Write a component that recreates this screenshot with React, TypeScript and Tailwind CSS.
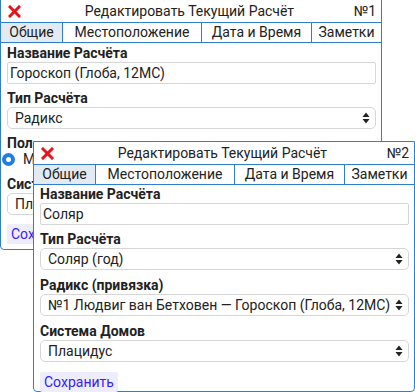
import React from "react";

const font = { fontFamily: "Roboto, 'Noto Sans', sans-serif" };

function CloseIcon() {
  return (
    <svg width="13" height="13" viewBox="0 0 13 13" className="block">
      <path d="M2 2 L11 11 M11 2 L2 11" stroke="#e8141c" strokeWidth="3" strokeLinecap="square" />
    </svg>
  );
}

function Arrows() {
  return (
    <svg width="8" height="12" viewBox="0 0 8 12" className="block">
      <path d="M4 0.5 L7.5 5 L0.5 5 Z" fill="#222" />
      <path d="M4 11.5 L7.5 7 L0.5 7 Z" fill="#222" />
    </svg>
  );
}

function Label({ children }: { children: React.ReactNode }) {
  return <div className="h-[17px] leading-[17px] text-[14px] font-bold text-[#222]">{children}</div>;
}

function TextBox({ value }: { value: string }) {
  return (
    <div className="h-[22px] border border-[#d6d6d6] rounded-[2px] px-[2px] leading-[20px] text-[14px] text-[#222] whitespace-nowrap overflow-hidden">
      {value}
    </div>
  );
}

function SelectBox({ value }: { value: string }) {
  return (
    <div className="h-[22px] border border-[#d6d6d6] rounded-[5px] pl-[7px] pr-[5px] flex items-center justify-between text-[14px] text-[#222] whitespace-nowrap overflow-hidden">
      <span>{value}</span>
      <Arrows />
    </div>
  );
}

function TitleBar({ num }: { num: string }) {
  return (
    <div className="h-[22px] flex items-center pl-[7px] pr-[5px] text-[14px] text-[#222]">
      <CloseIcon />
      <div className="flex-1 text-center pl-[4px]">Редактировать Текущий Расчёт</div>
      <div>{num}</div>
    </div>
  );
}

function Tabs() {
  const tabs = [
    { name: "Общие", w: "w-[61px]", active: true },
    { name: "Местоположение", w: "w-[139px]", active: false },
    { name: "Дата и Время", w: "w-[110px]", active: false },
    { name: "Заметки", w: "flex-1", active: false },
  ];
  return (
    <div className="h-[21px] flex border-t border-b border-[#2f7fd0] text-[14px] text-[#222]">
      {tabs.map((t, i) => (
        <div
          key={t.name}
          className={
            t.w +
            " h-full leading-[19px] text-center " +
            (i > 0 ? "border-l border-[#2f7fd0] " : "") +
            (t.active ? "bg-[#e3eaf1]" : "")
          }
        >
          {t.name}
        </div>
      ))}
    </div>
  );
}

function SaveButton() {
  return (
    <div className="inline-block h-[20px] px-[4px] leading-[20px] rounded-[2px] bg-[#ededfc] text-[14px] text-[#3a1cf5]">
      Сохранить
    </div>
  );
}

function WindowOne() {
  return (
    <div className="absolute left-0 top-[-1px] w-[382px] h-[251px] bg-white border border-[#2f7fd0] rounded-b-[4px]">
      <TitleBar num="№1" />
      <Tabs />
      <div className="pl-[6px] pr-[5px] pt-[2px]">
        <Label>Название Расчёта</Label>
        <TextBox value="Гороскоп (Глоба, 12МС)" />
        <div className="h-[6px]" />
        <Label>Тип Расчёта</Label>
        <SelectBox value="Радикс" />
        <div className="h-[6px]" />
        <Label>Пол</Label>
        <div className="flex items-center gap-[8px] h-[15px] -ml-[5px] text-[14px] text-[#222]">
          <span className="w-[13px] h-[13px] rounded-full bg-[#1f7ee6] flex items-center justify-center">
            <span className="w-[5px] h-[5px] rounded-full bg-white" />
          </span>
          <span>М</span>
          <span className="w-[13px] h-[13px] rounded-full border border-[#888] ml-[6px]" />
          <span>Ж</span>
        </div>
        <div className="h-[9px]" />
        <Label>Система Домов</Label>
        <SelectBox value="Плацидус" />
        <div className="h-[7px]" />
        <SaveButton />
      </div>
    </div>
  );
}

function WindowTwo() {
  return (
    <div className="absolute left-[33px] top-[141px] w-[382px] h-[251px] bg-white border border-[#2f7fd0] rounded-b-[4px]">
      <TitleBar num="№2" />
      <Tabs />
      <div className="pl-[6px] pr-[5px] pt-[1px]">
        <Label>Название Расчёта</Label>
        <TextBox value="Соляр" />
        <div className="h-[6px]" />
        <Label>Тип Расчёта</Label>
        <SelectBox value="Соляр (год)" />
        <div className="h-[7px]" />
        <Label>Радикс (привязка)</Label>
        <SelectBox value="№1 Людвиг ван Бетховен — Гороскоп (Глоба, 12МС)" />
        <div className="h-[7px]" />
        <Label>Система Домов</Label>
        <SelectBox value="Плацидус" />
        <div className="h-[8px]" />
        <SaveButton />
      </div>
    </div>
  );
}

export default function App() {
  return (
    <div className="relative w-[415px] h-[392px] bg-white overflow-hidden" style={font}>
      <WindowOne />
      <WindowTwo />
    </div>
  );
}
